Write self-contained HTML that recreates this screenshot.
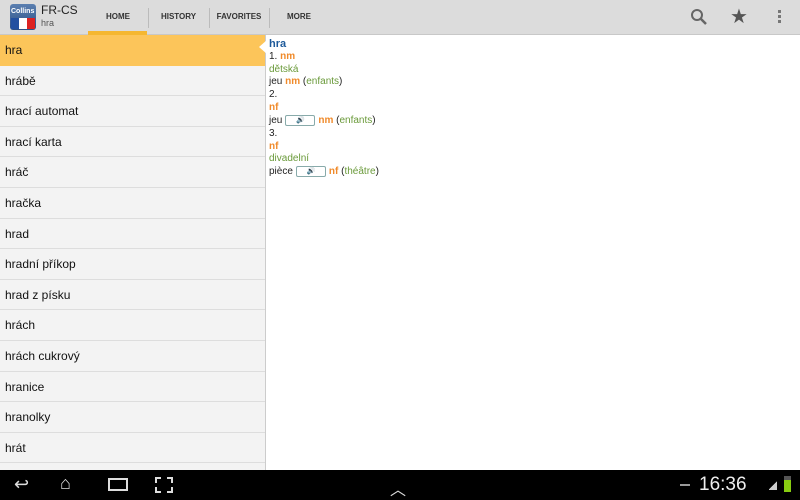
<!DOCTYPE html>
<html><head><style>
*{margin:0;padding:0;box-sizing:border-box}
body{width:800px;height:500px;overflow:hidden;background:#fff;font-family:"Liberation Sans",sans-serif;position:relative}
.top{position:absolute;left:0;top:0;width:800px;height:35px;background:#dcdcdc;border-bottom:1px solid #c8c8c8}
.tab{position:absolute;top:0;height:35px;font-size:8px;font-weight:bold;color:#333;line-height:34px;text-align:center}
.sep{position:absolute;top:8px;width:1px;height:20px;background:#bbb}
.list{position:absolute;left:0;top:35px;width:266px;height:435px;background:#f3f3f3;border-right:1px solid #ccc}
.row{height:30.6px;border-bottom:1px solid #ddd;font-size:12px;color:#111;padding-left:5px;line-height:31px}
.sel{background:#fcc55a;border-bottom:none}
.ent{position:absolute;left:269px;top:38px;font-size:10px;line-height:12.8px;color:#222}
.o{color:#f08a2a;font-weight:bold}.g{color:#6a9a3a}.b{color:#1e5a9a;font-weight:bold;font-size:11px}
.spk{display:inline-block;width:30px;height:11px;border:1px solid #8aa;border-radius:2px;vertical-align:middle;margin:0 3px;text-align:center;font-size:7px;color:#36c;line-height:9px}
.bot{position:absolute;left:0;top:470px;width:800px;height:30px;background:#000;color:#ddd}
</style></head><body>
<div class="top">
 <div style="position:absolute;left:10px;top:4px;width:26px;height:26px;border-radius:3px;background:linear-gradient(#5a7fb0,#2c4f85)">
  <div style="position:absolute;left:1px;top:4px;font-size:7px;font-weight:bold;color:#fff">Collins</div>
  <div style="position:absolute;left:1px;top:14px;width:24px;height:11px;background:linear-gradient(90deg,#2350a0 33%,#fff 33%,#fff 66%,#d22 66%)"></div>
 </div>
 <div style="position:absolute;left:41px;top:3px;font-size:12px;color:#222">FR-CS</div>
 <div style="position:absolute;left:41px;top:18px;font-size:9px;color:#555">hra</div>
 <div class="tab" style="left:88px;width:60px">HOME</div>
 <div style="position:absolute;left:88px;top:31px;width:59px;height:4px;background:#f5b731"></div>
 <div class="sep" style="left:148px"></div>
 <div class="tab" style="left:148px;width:61px">HISTORY</div>
 <div class="sep" style="left:209px"></div>
 <div class="tab" style="left:209px;width:60px">FAVORITES</div>
 <div class="sep" style="left:269px"></div>
 <div class="tab" style="left:269px;width:60px">MORE</div>
 <svg style="position:absolute;left:690px;top:8px" width="18" height="18"><circle cx="7" cy="7" r="5" fill="none" stroke="#666" stroke-width="2"/><line x1="11" y1="11" x2="16" y2="16" stroke="#666" stroke-width="2.5"/></svg>
 <div style="position:absolute;left:730px;top:4px;font-size:20px;color:#555">★</div>
 <div style="position:absolute;left:778px;top:10px;width:3px;height:3px;background:#777;box-shadow:0 5px #777,0 10px #777"></div>
</div>
<div class="list">
 <div class="row sel">hra</div>
 <div class="row">hrábě</div>
 <div class="row">hrací automat</div>
 <div class="row">hrací karta</div>
 <div class="row">hráč</div>
 <div class="row">hračka</div>
 <div class="row">hrad</div>
 <div class="row">hradní příkop</div>
 <div class="row">hrad z písku</div>
 <div class="row">hrách</div>
 <div class="row">hrách cukrový</div>
 <div class="row">hranice</div>
 <div class="row">hranolky</div>
 <div class="row">hrát</div>
</div>
<div style="position:absolute;left:259px;top:40px;width:0;height:0;border-top:7px solid transparent;border-bottom:7px solid transparent;border-right:8px solid #fff"></div>
<div class="ent">
<div class="b">hra</div>
<div>1. <span class="o">nm</span></div>
<div class="g">dětská</div>
<div>jeu <span class="o">nm</span> (<span class="g">enfants</span>)</div>
<div>2.</div>
<div class="o">nf</div>
<div>jeu<span class="spk">🔊</span><span class="o">nm</span> (<span class="g">enfants</span>)</div>
<div>3.</div>
<div class="o">nf</div>
<div class="g">divadelní</div>
<div>pièce<span class="spk">🔊</span><span class="o">nf</span> (<span class="g">théâtre</span>)</div>
</div>
<div class="bot">
 <div style="position:absolute;left:14px;top:4px;font-size:18px">↩</div>
 <div style="position:absolute;left:60px;top:3px;font-size:18px">⌂</div>
 <div style="position:absolute;left:108px;top:8px;width:20px;height:13px;border:2px solid #ddd"></div>
 <div style="position:absolute;left:155px;top:7px;width:18px;height:16px;border:2px dashed #ddd"></div>
 <div style="position:absolute;left:390px;top:6px;font-size:16px">︿</div>
 <div style="position:absolute;left:680px;top:14px;width:10px;height:2px;background:#999"></div>
 <div style="position:absolute;left:699px;top:4px;font-size:19px;color:#eee">16:36</div>
 <div style="position:absolute;left:769px;top:11px;width:8px;height:9px;background:linear-gradient(135deg,transparent 50%,#ccc 50%)"></div>
 <div style="position:absolute;left:784px;top:6px;width:7px;height:16px;background:#8c1;border-top:4px solid #555"></div>
</div>
</body></html>
